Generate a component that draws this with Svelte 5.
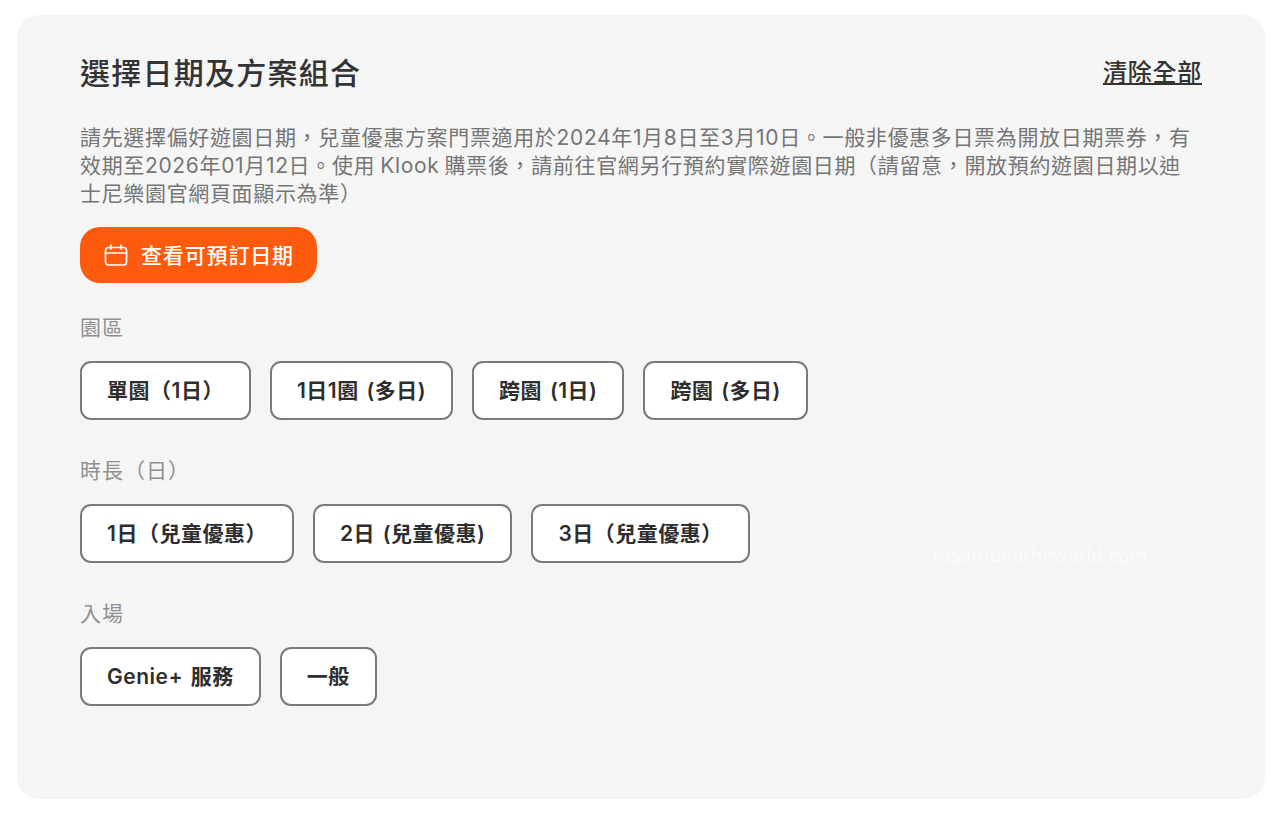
<script>
  const groups = [
    { label: '園區', items: ['單園（1日）', '1日1園 (多日)', '跨園 (1日)', '跨園 (多日)'] },
    { label: '時長（日）', items: ['1日（兒童優惠）', '2日 (兒童優惠)', '3日（兒童優惠）'] },
    { label: '入場', items: ['Genie+ 服務', '一般'] }
  ];
</script>

<main class="card">
  <header class="head">
    <h1>選擇日期及方案組合</h1>
    <span class="clear">清除全部</span>
  </header>
  <p class="desc">請先選擇偏好遊園日期，兒童優惠方案門票適用於2024年1月8日至3月10日。一般非優惠多日票為開放日期票券，有<br />效期至2026年01月12日。使用 Klook 購票後，請前往官網另行預約實際遊園日期（請留意，開放預約遊園日期以迪<br />士尼樂園官網頁面顯示為準）</p>
  <button class="cta">
    <svg width="26" height="26" viewBox="0 0 26 26" fill="none" stroke="#fff" stroke-width="1.7" stroke-linecap="round" stroke-linejoin="round">
      <rect x="2.5" y="5.5" width="21" height="17.5" rx="3" />
      <path d="M2.5 11h21M8 3v4M18 3v4" />
    </svg>
    <span>查看可預訂日期</span>
  </button>
  {#each groups as g}
    <section class="group">
      <div class="label">{g.label}</div>
      <div class="chips">
        {#each g.items as item}
          <button class="chip">{item}</button>
        {/each}
      </div>
    </section>
  {/each}
  <span class="mark">rosaroundtheworld.com</span>
</main>

<style>
  :global(body) {
    margin: 0;
    background: #fff;
  }
  .card {
    position: relative;
    box-sizing: border-box;
    width: 1248px;
    height: 784px;
    margin: 15px 0 0 17px;
    padding: 38px 63px 0;
    background: #f5f5f5;
    border-radius: 22px;
    font-family: Inter, "Noto Sans CJK TC", sans-serif;
    color: #333;
  }
  .head {
    display: flex;
    justify-content: space-between;
    align-items: center;
    height: 40px;
  }
  h1 {
    margin: 0;
    font-size: 30px;
    font-weight: 500;
    letter-spacing: 1.25px;
    line-height: 40px;
    color: #333;
  }
  .clear {
    padding-bottom: 5px;
    font-size: 24px;
    font-weight: 500;
    letter-spacing: 0.75px;
    text-decoration: underline;
    color: #333;
  }
  .desc {
    margin: 31px 0 0;
    font-size: 21px;
    line-height: 28px;
    letter-spacing: 0.66px;
    word-spacing: -1.5px;
    color: #757575;
    white-space: nowrap;
  }
  .cta {
    display: flex;
    align-items: center;
    gap: 12px;
    width: 237px;
    height: 56px;
    margin-top: 19px;
    padding: 0 0 0 23px;
    border: 0;
    border-radius: 20px;
    background: #ff5b0f;
    color: #fff;
    font: 500 21px Inter, "Noto Sans CJK TC", sans-serif;
    letter-spacing: 0.85px;
  }
  .cta span {
    padding-bottom: 3px;
  }
  .group {
    margin-top: 29px;
  }
  .group + .group {
    margin-top: 35px;
  }
  .label {
    font-size: 21px;
    line-height: 32px;
    letter-spacing: 1px;
    color: #909090;
  }
  .chips {
    display: flex;
    gap: 19px;
    margin-top: 17px;
  }
  .chip {
    box-sizing: border-box;
    height: 59px;
    padding: 0 25px 4px;
    border: 2px solid #7a7a7a;
    border-radius: 11px;
    background: #fff;
    color: #2e2e2e;
    font: 600 21px Inter, "Noto Sans CJK TC", sans-serif;
    letter-spacing: 0.5px;
    word-spacing: 2px;
    white-space: nowrap;
  }
  .mark {
    position: absolute;
    left: 916px;
    top: 530px;
    font-family: "DejaVu Sans", sans-serif;
    font-size: 18px;
    color: rgba(255, 255, 255, 0.65);
  }
</style>
